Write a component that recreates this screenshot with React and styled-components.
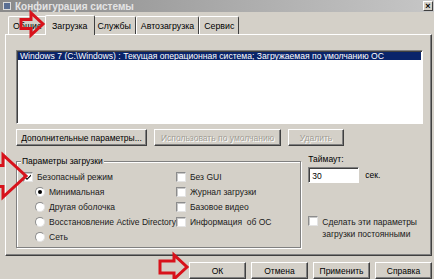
import React from 'react';
import styled, { createGlobalStyle } from 'styled-components';

const GlobalStyle = createGlobalStyle`
  html, body { margin: 0; padding: 0; }
  body { background: #d4d0c8; }
`;

const Window = styled.div`
  position: relative;
  width: 434px;
  height: 279px;
  overflow: hidden;
  background: #d4d0c8;
  font-family: 'Liberation Sans', Arial, sans-serif;
  font-size: 8.5px;
  color: #000;
  display: flex;
  flex-direction: column;
`;

const TitleBar = styled.div`
  height: 12px;
  display: flex;
  align-items: center;
  padding-left: 3px;
  background: linear-gradient(to right, #8a8a8a, #acacac 55%, #c6c6c6);
`;

const TitleIcon = styled.div`
  width: 8px;
  height: 8px;
  margin-right: 4px;
  background: #5a6f94;
  border: 1px solid #dcdcdc;
  box-sizing: border-box;
`;

const TitleText = styled.div`
  flex: 1;
  color: #e4e4e4;
  font-weight: bold;
  font-size: 10px;
`;

const CloseButton = styled.div`
  width: 10px;
  height: 10px;
  margin-right: 1px;
  background: #d4d0c8;
  border: 1px solid;
  border-color: #fff #404040 #404040 #fff;
  box-sizing: border-box;
  display: flex;
  align-items: center;
  justify-content: center;
  font-size: 9px;
  font-weight: bold;
  line-height: 1;
`;

const Tabs = styled.div`
  display: flex;
  align-items: flex-end;
  height: 22px;
  padding-left: 8px;
`;

const Tab = styled.div`
  height: ${p => (p.$active ? 20 : 18)}px;
  margin: 0 ${p => (p.$active ? -2 : 0)}px ${p => (p.$active ? -1 : 0)}px;
  padding: 0 ${p => (p.$active ? 6 : 4)}px;
  position: relative;
  z-index: ${p => (p.$active ? 2 : 1)};
  display: flex;
  align-items: center;
  box-sizing: border-box;
  background: #d4d0c8;
  border: 1px solid;
  border-color: #fff #404040 transparent #fff;
  border-bottom: none;
  border-radius: 2px 2px 0 0;
  font-size: 8.8px;
`;

const Panel = styled.div`
  margin: 0 2px 0 5px;
  height: 222px;
  box-sizing: border-box;
  border: 1px solid;
  border-color: #fff #404040 #404040 #fff;
  box-shadow: inset -1px -1px #808080;
  padding: 15px 8px 0 10px;
  display: flex;
  flex-direction: column;
`;

const ListBox = styled.div`
  height: 74px;
  background: #fff;
  box-sizing: border-box;
  border: 1px solid;
  border-color: #808080 #fff #fff #808080;
  box-shadow: inset 1px 1px #404040;
  padding: 1px 0 0 1px;
`;

const ListItem = styled.div`
  height: 8px;
  line-height: 8px;
  padding-left: 2px;
  margin-right: 1px;
  white-space: nowrap;
  overflow: hidden;
  background: ${p => (p.$selected ? '#0a246a' : 'transparent')};
  color: ${p => (p.$selected ? '#fff' : '#000')};
  font-size: 8.6px;
`;

const ButtonRow = styled.div`
  display: flex;
  gap: 7px;
  margin-top: 5px;
`;

const Button = styled.div`
  width: ${p => p.$w}px;
  height: 17px;
  box-sizing: border-box;
  display: flex;
  align-items: center;
  justify-content: center;
  white-space: nowrap;
  background: #d4d0c8;
  border: 1px solid;
  border-color: #fff #404040 #404040 #fff;
  box-shadow: inset -1px -1px #808080;
  color: ${p => (p.$disabled ? '#a09c94' : '#000')};
  text-shadow: ${p => (p.$disabled ? '1px 1px #fff' : 'none')};
`;

const OptionsRow = styled.div`
  display: flex;
  gap: 7px;
  margin-top: 8px;
`;

const GroupBox = styled.div`
  position: relative;
  width: 286px;
  height: 87px;
  margin-top: 7px;
  box-sizing: border-box;
  border: 1px solid #808080;
  box-shadow: inset 1px 1px #fff, 1px 1px #fff;
  padding: 7px 0 0 6px;
`;

const Legend = styled.div`
  position: absolute;
  top: -7px;
  left: 4px;
  padding: 0 1px;
  background: #d4d0c8;
  line-height: 12px;
`;

const OptionGrid = styled.div`
  display: grid;
  grid-template-columns: 153px 1fr;
  grid-auto-rows: 15px;
`;

const Option = styled.label`
  display: flex;
  align-items: center;
  gap: 4px;
  padding-left: ${p => (p.$indent ? 12 : 0)}px;
  white-space: nowrap;
  color: #1a1a1a;
`;

const Check = styled.span`
  width: 10px;
  height: 10px;
  flex: none;
  box-sizing: border-box;
  background: #fff;
  border: 1px solid;
  border-color: #8c8c8c #e4e4e4 #e4e4e4 #8c8c8c;
  box-shadow: inset 1px 1px #c8c8c8;
  display: flex;
  align-items: center;
  justify-content: center;
`;

const Radio = styled.span`
  width: 10px;
  height: 10px;
  flex: none;
  box-sizing: border-box;
  border-radius: 50%;
  background: #fff;
  border: 1px solid;
  border-color: #8c8c8c #e4e4e4 #e4e4e4 #8c8c8c;
  display: flex;
  align-items: center;
  justify-content: center;
  &::after {
    content: '';
    width: 4px;
    height: 4px;
    border-radius: 50%;
    background: ${p => (p.$checked ? '#000' : 'transparent')};
  }
`;

const SideColumn = styled.div`
  display: flex;
  flex-direction: column;
  width: 115px;
`;

const TimeoutRow = styled.div`
  display: flex;
  align-items: flex-end;
  gap: 6px;
  margin-top: 3px;
`;

const TextInput = styled.div`
  width: 51px;
  height: 16px;
  box-sizing: border-box;
  background: #fff;
  border: 1px solid;
  border-color: #808080 #fff #fff #808080;
  box-shadow: inset 1px 1px #404040;
  padding: 3px 0 0 3px;
`;

const Unit = styled.span`
  padding-bottom: 3px;
`;

const PermanentOption = styled.label`
  display: flex;
  align-items: flex-start;
  gap: 4px;
  margin-top: 33px;
  line-height: 12px;
  color: #1a1a1a;
`;

const Footer = styled.div`
  display: flex;
  justify-content: flex-end;
  gap: 5px;
  padding: 6px 2px 0 0;
`;

const Arrow = styled.svg`
  position: absolute;
  z-index: 10;
  left: ${p => p.$x}px;
  top: ${p => p.$y}px;
  overflow: visible;
  pointer-events: none;
`;

const RedArrow = ({ x, y, w, h, shaft }) => {
  const s = w - Math.round(h * 0.55);
  const t = (h - shaft) / 2;
  return (
    <Arrow $x={x} $y={y} width={w} height={h}>
      <polygon
        points={`0,${t} ${s},${t} ${s},0 ${w},${h / 2} ${s},${h} ${s},${h - t} 0,${h - t}`}
        fill="none"
        stroke="#d8121b"
        strokeWidth="3"
        strokeLinejoin="miter"
      />
    </Arrow>
  );
};

const CheckMark = () => (
  <svg width="8" height="8" viewBox="0 0 8 8">
    <path d="M1 3.5 L3 5.5 L7 1.5 L7 3 L3 7 L1 5 Z" fill="#000" />
  </svg>
);

const tabs = ['Общие', 'Загрузка', 'Службы', 'Автозагрузка', 'Сервис'];

export default function App() {
  return (
    <Window>
      <GlobalStyle />
      <TitleBar>
        <TitleIcon />
        <TitleText>Конфигурация системы</TitleText>
        <CloseButton>×</CloseButton>
      </TitleBar>
      <Tabs>
        {tabs.map(t => (
          <Tab key={t} $active={t === 'Загрузка'}>{t}</Tab>
        ))}
      </Tabs>
      <Panel>
        <ListBox>
          <ListItem $selected>
            Windows 7 (C:\Windows) : Текущая операционная система; Загружаемая по умолчанию ОС
          </ListItem>
        </ListBox>
        <ButtonRow>
          <Button $w={131}>Дополнительные параметры...</Button>
          <Button $w={127} $disabled>Использовать по умолчанию</Button>
          <Button $w={56} $disabled>Удалить</Button>
        </ButtonRow>
        <OptionsRow>
          <GroupBox>
            <Legend>Параметры загрузки</Legend>
            <OptionGrid>
              <Option><Check><CheckMark /></Check>Безопасный режим</Option>
              <Option><Check />Без GUI</Option>
              <Option $indent><Radio $checked />Минимальная</Option>
              <Option><Check />Журнал загрузки</Option>
              <Option $indent><Radio />Другая оболочка</Option>
              <Option><Check />Базовое видео</Option>
              <Option $indent><Radio />Восстановление Active Directory</Option>
              <Option><Check />Информация&nbsp; об ОС</Option>
              <Option $indent><Radio />Сеть</Option>
            </OptionGrid>
          </GroupBox>
          <SideColumn>
            <span>Таймаут:</span>
            <TimeoutRow>
              <TextInput>30</TextInput>
              <Unit>сек.</Unit>
            </TimeoutRow>
            <PermanentOption>
              <Check />
              <span>Сделать эти параметры<br />загрузки постоянными</span>
            </PermanentOption>
          </SideColumn>
        </OptionsRow>
      </Panel>
      <Footer>
        <Button $w={57}>ОК</Button>
        <Button $w={57}>Отмена</Button>
        <Button $w={57}>Применить</Button>
        <Button $w={57}>Справка</Button>
      </Footer>
      <RedArrow x={21} y={13} w={22} h={22} shaft={9} />
      <RedArrow x={-3} y={155} w={29} h={42} shaft={21} />
      <RedArrow x={160} y={255} w={27} h={24} shaft={12} />
    </Window>
  );
}
